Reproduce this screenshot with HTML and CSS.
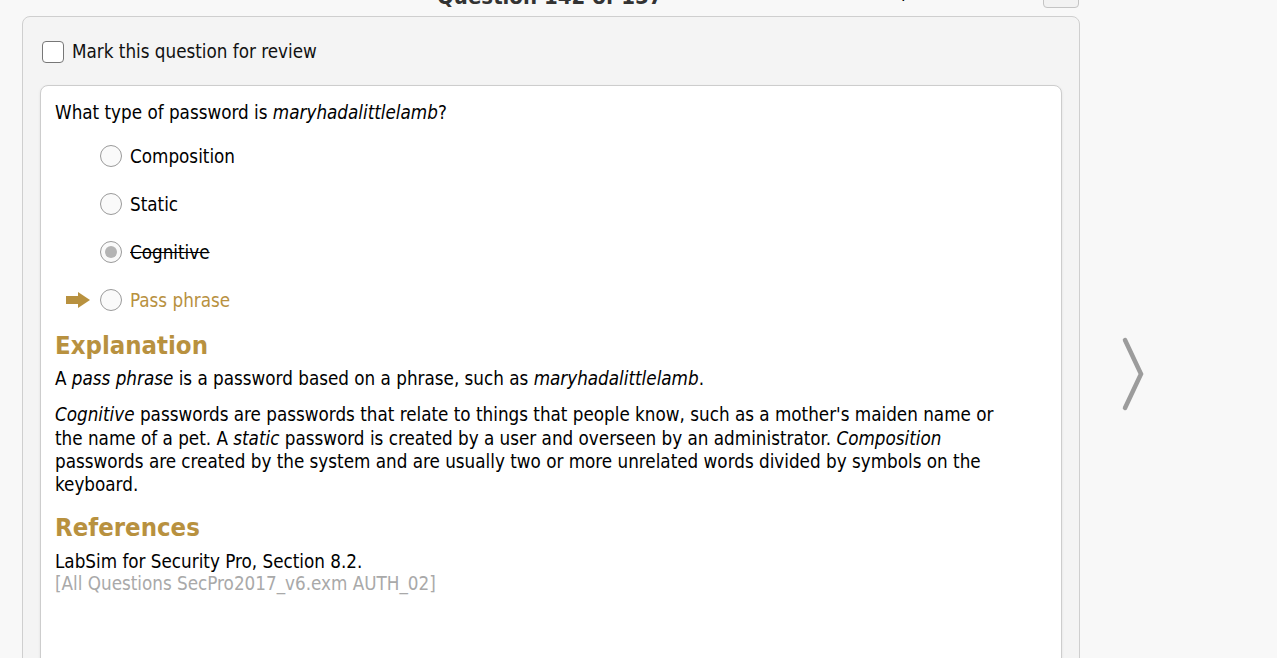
FILE: index.html
```html
<!DOCTYPE html>
<html>
<head>
<meta charset="utf-8">
<link rel="stylesheet" href="styles.css">
</head>
<body>
<div class="page">
  <div class="main">
    <div class="topbar">
      <div class="title">Question 142 of 157</div>
      <div class="timer">Time Spent</div>
      <div class="topbtn"></div>
    </div>
    <div class="panel">
      <label class="review"><span class="checkbox"></span>Mark this question for review</label>
      <div class="card">
        <p class="question">What type of password is <i>maryhadalittlelamb</i>?</p>
        <ul class="options">
          <li class="option"><span class="marker"></span><span class="radio"></span><span>Composition</span></li>
          <li class="option"><span class="marker"></span><span class="radio"></span><span>Static</span></li>
          <li class="option struck"><span class="marker"></span><span class="radio checked"></span><span>Cognitive</span></li>
          <li class="option correct"><span class="marker"><svg width="24" height="18" viewBox="0 0 24 18"><path d="M0 5 H12 V1 L24 9 L12 17 V13 H0 Z" fill="#b8913f"/></svg></span><span class="radio"></span><span>Pass phrase</span></li>
        </ul>
        <h2 class="heading">Explanation</h2>
        <p class="text">A <i>pass phrase</i> is a password based on a phrase, such as <i>maryhadalittlelamb</i>.</p>
        <p class="text">
          <i>Cognitive</i> passwords are passwords that relate to things that people know, such as a mother's maiden name or the name of a pet. A <i>static</i> password is created by a user and overseen by an administrator. <i>Composition</i> passwords are created by the system and are usually two or more unrelated words divided by symbols on the keyboard.
        </p>
        <h2 class="heading">References</h2>
        <p class="ref">LabSim for Security Pro, Section 8.2.<br><span class="source">[All Questions SecPro2017_v6.exm AUTH_02]</span></p>
      </div>
    </div>
  </div>
  <div class="nav">
    <svg class="chevron" width="24" height="76" viewBox="0 0 24 76"><path d="M4 4 L20 38 L4 72" fill="none" stroke="#9c9c9c" stroke-width="4.5" stroke-linecap="round" stroke-linejoin="miter"/></svg>
  </div>
</div>
</body>
</html>
```
FILE: styles.css
```css
html, body {
  margin: 0;
  padding: 0;
}
body {
  background: #f8f8f8;
  font-family: "DejaVu Sans Condensed", "DejaVu Sans", sans-serif;
  color: #000;
  overflow: hidden;
  height: 658px;
}
.page {
  display: flex;
}
.main {
  margin-left: 22px;
  width: 1058px;
}
.topbar {
  height: 16px;
  position: relative;
}
.title {
  position: absolute;
  left: 415px;
  top: -14px;
  font-size: 22px;
  font-weight: bold;
  color: #333;
  line-height: 22px;
  white-space: nowrap;
}
.timer {
  position: absolute;
  left: 822px;
  top: -19px;
  font-size: 18.7px;
  line-height: 20px;
  color: #000;
  white-space: nowrap;
}
.topbtn {
  position: absolute;
  left: 1021px;
  top: -10px;
  width: 34px;
  height: 16px;
  border: 1px solid #c4c4c4;
  border-radius: 4px;
  background: #f2f2f2;
}
.panel {
  background: #f4f4f4;
  border: 1px solid #cfcfcf;
  border-radius: 8px;
  padding: 23px 17px 0 17px;
  height: 700px;
  box-sizing: border-box;
}
.review {
  display: flex;
  align-items: center;
  font-size: 18.7px;
  line-height: 24px;
  color: #111;
  gap: 8px;
  margin-left: 2px;
}
.checkbox {
  width: 20px;
  height: 20px;
  border: 1px solid #777;
  border-radius: 4px;
  background: #fff;
}
.card {
  margin-top: 21px;
  background: #fff;
  border: 1px solid #cdcdcd;
  border-radius: 8px;
  padding: 15px 15px 0 14px;
  height: 620px;
  box-shadow: 0 1px 3px rgba(0,0,0,0.08);
}
.question {
  margin: 0;
  font-size: 18.7px;
  line-height: 24px;
}
.options {
  list-style: none;
  margin: 7px 0 0 0;
  padding: 0;
}
.option {
  display: flex;
  align-items: center;
  height: 48px;
  font-size: 18.7px;
}
.marker {
  width: 45px;
  display: flex;
  justify-content: flex-end;
  padding-right: 10px;
  box-sizing: border-box;
}
.radio {
  width: 20px;
  height: 20px;
  border: 1px solid #9a9a9a;
  border-radius: 50%;
  background: #fafafa;
  margin-right: 8px;
  position: relative;
  flex: none;
}
.radio.checked::after {
  content: "";
  position: absolute;
  left: 4px;
  top: 4px;
  width: 12px;
  height: 12px;
  border-radius: 50%;
  background: #b4b4b4;
}
.struck span:last-child {
  text-decoration: line-through;
}
.correct {
  color: #b8913f;
}
.heading {
  margin: 6px 0 0 0;
  font-size: 25.5px;
  line-height: 30px;
  font-weight: bold;
  color: #b8913f;
}
.text {
  margin: 7px 0 0 0;
  font-size: 18.7px;
  line-height: 23.3px;
  max-width: 960px;
}
.text + .text {
  margin-top: 13px;
}
.text + .heading {
  margin-top: 16px;
}
.ref {
  margin: 9px 0 0 0;
  font-size: 18.7px;
  line-height: 22px;
}
.source {
  color: #a9a9a9;
}
.nav {
  flex: 1;
  display: flex;
  justify-content: flex-start;
  padding-top: 336px;
  padding-left: 41px;
}
.chevron {
  display: block;
}
```
